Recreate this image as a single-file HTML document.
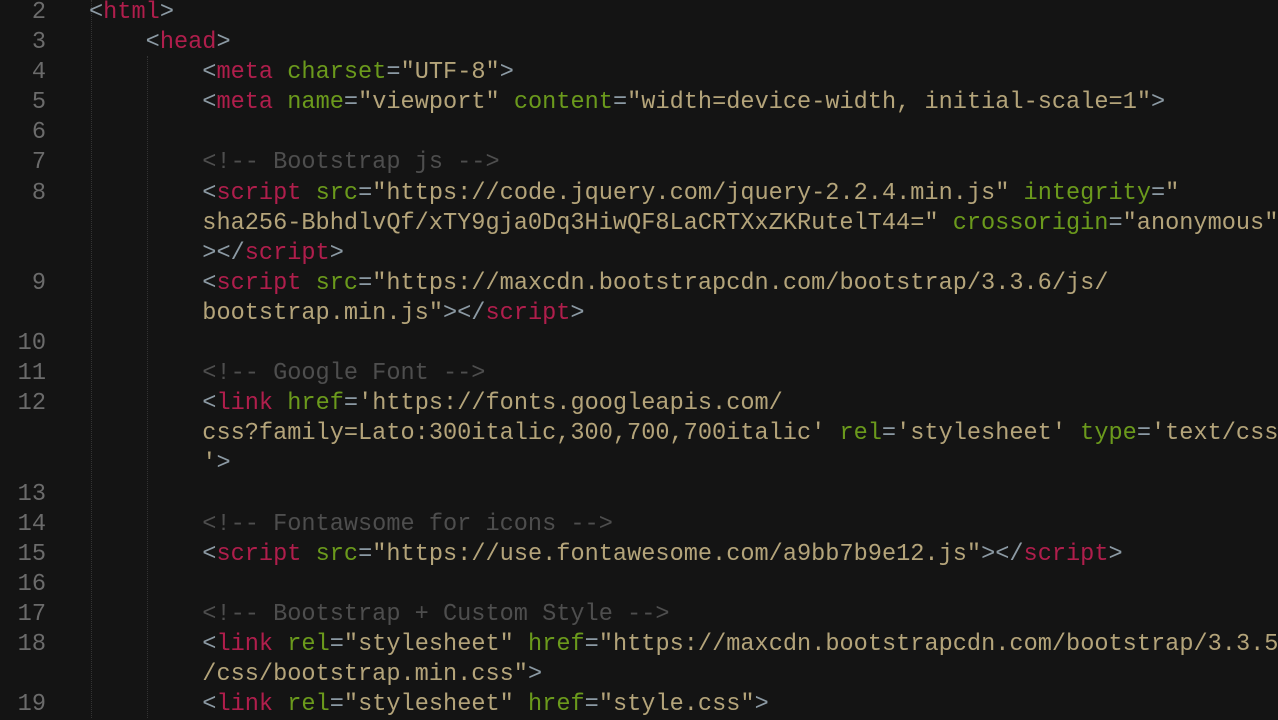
<!DOCTYPE html>
<html><head><meta charset="utf-8"><style>
body{margin:0;background:#141414;width:1278px;height:718px;overflow:hidden;font-family:"Liberation Mono",monospace;font-size:23.6px;}
.wrap{position:absolute;top:-2px;left:0;}
.l{height:30.1px;line-height:30px;white-space:pre;position:relative;}
.n{position:absolute;left:0;width:46px;text-align:right;color:#6b6b6b;}
.c{position:absolute;left:89px;color:#b8a878;}
.t{color:#b01e4c}.p{color:#8c9aa4}.a{color:#6b9a1c}.s{color:#b4a47a}.m{color:#4e4e4e}
.g{position:absolute;top:0;bottom:0;border-left:1px dotted #333;}
</style></head><body>
<div class="g" style="left:91px"></div><div class="g" style="left:147px;top:56px"></div>
<div class="wrap">
<div class="l"><span class="n">2</span><span class="c"><span class="p">&lt;</span><span class="t">html</span><span class="p">&gt;</span></span></div>
<div class="l"><span class="n">3</span><span class="c">    <span class="p">&lt;</span><span class="t">head</span><span class="p">&gt;</span></span></div>
<div class="l"><span class="n">4</span><span class="c">        <span class="p">&lt;</span><span class="t">meta</span> <span class="a">charset</span><span class="p">=</span><span class="s">"UTF-8"</span><span class="p">&gt;</span></span></div>
<div class="l"><span class="n">5</span><span class="c">        <span class="p">&lt;</span><span class="t">meta</span> <span class="a">name</span><span class="p">=</span><span class="s">"viewport"</span> <span class="a">content</span><span class="p">=</span><span class="s">"width=device-width, initial-scale=1"</span><span class="p">&gt;</span></span></div>
<div class="l"><span class="n">6</span></div>
<div class="l"><span class="n">7</span><span class="c">        <span class="m">&lt;!-- Bootstrap js --&gt;</span></span></div>
<div class="l"><span class="n">8</span><span class="c">        <span class="p">&lt;</span><span class="t">script</span> <span class="a">src</span><span class="p">=</span><span class="s">"https://code.jquery.com/jquery-2.2.4.min.js"</span> <span class="a">integrity</span><span class="p">=</span><span class="s">"</span></span></div>
<div class="l"><span class="c">        <span class="s">sha256-BbhdlvQf/xTY9gja0Dq3HiwQF8LaCRTXxZKRutelT44="</span> <span class="a">crossorigin</span><span class="p">=</span><span class="s">"anonymous"</span></span></div>
<div class="l"><span class="c">        <span class="p">&gt;&lt;/</span><span class="t">script</span><span class="p">&gt;</span></span></div>
<div class="l"><span class="n">9</span><span class="c">        <span class="p">&lt;</span><span class="t">script</span> <span class="a">src</span><span class="p">=</span><span class="s">"https://maxcdn.bootstrapcdn.com/bootstrap/3.3.6/js/</span></span></div>
<div class="l"><span class="c">        <span class="s">bootstrap.min.js"</span><span class="p">&gt;&lt;/</span><span class="t">script</span><span class="p">&gt;</span></span></div>
<div class="l"><span class="n">10</span></div>
<div class="l"><span class="n">11</span><span class="c">        <span class="m">&lt;!-- Google Font --&gt;</span></span></div>
<div class="l"><span class="n">12</span><span class="c">        <span class="p">&lt;</span><span class="t">link</span> <span class="a">href</span><span class="p">=</span><span class="s">'https://fonts.googleapis.com/</span></span></div>
<div class="l"><span class="c">        <span class="s">css?family=Lato:300italic,300,700,700italic'</span> <span class="a">rel</span><span class="p">=</span><span class="s">'stylesheet'</span> <span class="a">type</span><span class="p">=</span><span class="s">'text/css</span></span></div>
<div class="l"><span class="c">        <span class="s">'</span><span class="p">&gt;</span></span></div>
<div class="l"><span class="n">13</span></div>
<div class="l"><span class="n">14</span><span class="c">        <span class="m">&lt;!-- Fontawsome for icons --&gt;</span></span></div>
<div class="l"><span class="n">15</span><span class="c">        <span class="p">&lt;</span><span class="t">script</span> <span class="a">src</span><span class="p">=</span><span class="s">"https://use.fontawesome.com/a9bb7b9e12.js"</span><span class="p">&gt;&lt;/</span><span class="t">script</span><span class="p">&gt;</span></span></div>
<div class="l"><span class="n">16</span></div>
<div class="l"><span class="n">17</span><span class="c">        <span class="m">&lt;!-- Bootstrap + Custom Style --&gt;</span></span></div>
<div class="l"><span class="n">18</span><span class="c">        <span class="p">&lt;</span><span class="t">link</span> <span class="a">rel</span><span class="p">=</span><span class="s">"stylesheet"</span> <span class="a">href</span><span class="p">=</span><span class="s">"https://maxcdn.bootstrapcdn.com/bootstrap/3.3.5</span></span></div>
<div class="l"><span class="c">        <span class="s">/css/bootstrap.min.css"</span><span class="p">&gt;</span></span></div>
<div class="l"><span class="n">19</span><span class="c">        <span class="p">&lt;</span><span class="t">link</span> <span class="a">rel</span><span class="p">=</span><span class="s">"stylesheet"</span> <span class="a">href</span><span class="p">=</span><span class="s">"style.css"</span><span class="p">&gt;</span></span></div>
</div>
</body></html>
